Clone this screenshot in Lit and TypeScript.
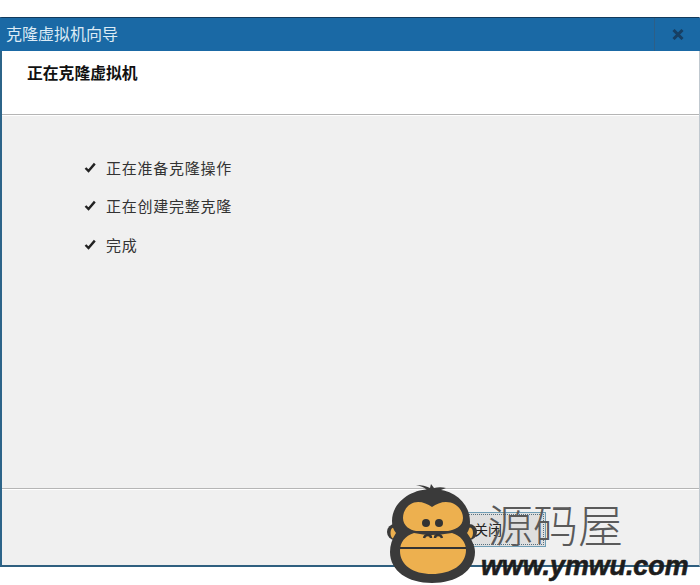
import { LitElement, html, css, svg } from "lit";
import { customElement } from "lit/decorators.js";

const monkey = svg`
  <circle cx="15" cy="52" r="8" fill="#3a3a3a"/>
  <circle cx="89" cy="52" r="8" fill="#3a3a3a"/>
  <ellipse cx="13.5" cy="53" rx="3" ry="5.5" fill="#edb04f"/>
  <ellipse cx="90" cy="53" rx="3" ry="5.5" fill="#edb04f"/>
  <path d="M47 10 C44 7 40 6 36 5 C42 5 46 6 50 8 L51 4 L54 8 C58 7 62 7 66 8 L56 12 Z" fill="#3a3a3a"/>
  <path d="M52 9 C74 9 90 23 90 42 C90 47 89 50 87 53 C92 60 95 66 95 72 C95 91 76 103 52 103 C28 103 10 91 10 72 C10 65 12 59 16 53 C13 49 12 46 12 41 C12 23 30 9 52 9 Z" fill="#3a3a3a"/>
  <path d="M38 22 C43 22 48 24 52 27 C56 24 61 22 66 22 C76 22 83 30 83 38 C83 47 74 50 68 51 L36 51 C30 50 23 46 23 38 C23 29 30 22 38 22 Z" fill="#edb04f"/>
  <path d="M34 53 C40 54 46 55 52 55 C58 55 64 54 72 53 C81 56 86 62 86 70 C86 85 71 94 52 94 C33 94 20 85 20 71 C20 62 25 56 34 53 Z" fill="#edb04f"/>
  <path d="M20 68 H86" stroke="#333" stroke-width="1.8" fill="none"/>
  <circle cx="46" cy="43" r="4" fill="#333"/>
  <circle cx="59" cy="43" r="4" fill="#333"/>
  <path d="M44 58 C45 54 51 54 51 58 M55 58 C55 54 61 54 62 58" stroke="#333" stroke-width="2.4" fill="none"/>
`;

@customElement("app-root")
export class AppRoot extends LitElement {
  static styles = css`
    :host {
      display: block;
      position: relative;
      width: 700px;
      height: 585px;
      background: #fff;
      overflow: hidden;
      font-family: "Noto Sans CJK SC", "Noto Sans", sans-serif;
    }
    .window {
      display: flex;
      flex-direction: column;
      position: absolute;
      inset: 17px 0 18px 0;
      border-top: 1px solid #123a5c;
      border-bottom: 2px solid #2f5f7f;
      border-left: 2px solid #2c6489;
      border-right: 1px solid #bfc8cf;
    }
    .titlebar {
      height: 33px;
      flex: none;
      display: flex;
      align-items: center;
      justify-content: space-between;
      background: #1a69a5;
      color: #dcebf5;
      font-size: 16px;
      line-height: 31px;
      margin-left: -2px;
      padding-left: 6px;
      margin-right: -1px;
    }
    .titlebar span {
      margin-top: -2px;
    }
    .close {
      width: 46px;
      height: 100%;
      box-sizing: border-box;
      border-left: 1px solid #2d5f87;
      display: flex;
      align-items: center;
      justify-content: center;
    }
    .header {
      height: 64px;
      flex: none;
      box-sizing: border-box;
      background: #fff;
      border-bottom: 1px solid #b5b5b5;
      padding: 11px 0 0 25px;
      font-size: 15.8px;
      font-weight: 700;
      line-height: 22px;
      color: #111;
    }
    .body {
      flex: 1;
      background: #f0f0f0;
      border-top: 1px solid #fff;
      padding: 40px 0 0 82px;
      display: flex;
      flex-direction: column;
      gap: 16.5px;
    }
    .step {
      display: flex;
      align-items: center;
      gap: 10px;
      height: 22px;
      font-size: 15px;
      letter-spacing: 0.75px;
      color: #333;
    }
    .footer {
      height: 77px;
      flex: none;
      box-sizing: border-box;
      border-top: 1px solid #b5b5b5;
      background: #f0f0f0;
      box-shadow: inset 0 1px 0 #fff;
      display: flex;
      align-items: center;
      justify-content: flex-end;
      padding: 4px 153px 0 0;
    }
    .btn {
      width: 116px;
      height: 35px;
      box-sizing: border-box;
      border: 1px solid #6f9db5;
      outline: 1px dotted #56707f;
      outline-offset: -3px;
      background: #dfdfdf;
      color: #222;
      font: inherit;
      font-size: 14px;
      padding: 0;
    }
    .logo {
      position: absolute;
      left: 380px;
      top: 480px;
      width: 105px;
      height: 105px;
    }
    .brand {
      position: absolute;
      left: 488px;
      top: 494px;
      font-size: 45px;
      line-height: 60px;
      font-weight: 300;
      color: #5a5a5a;
      white-space: nowrap;
    }
    .url {
      position: absolute;
      left: 481px;
      top: 548px;
      font-family: "Liberation Sans", Arial, sans-serif;
      font-size: 26.8px;
      line-height: 36px;
      font-weight: 700;
      font-style: italic;
      color: #1d1d1d;
      white-space: nowrap;
      -webkit-text-stroke: 0.6px #1d1d1d;
    }
  `;

  private check() {
    return html`<svg width="12" height="11" viewBox="0 0 12 11">
      <path d="M1.5 6 L4.5 9 L10.8 1.6" stroke="#222" stroke-width="2.4" fill="none"/>
    </svg>`;
  }

  render() {
    const steps = ["正在准备克隆操作", "正在创建完整克隆", "完成"];
    return html`
      <div class="window">
        <div class="titlebar">
          <span>克隆虚拟机向导</span>
          <div class="close">
            <svg width="12" height="11" viewBox="0 0 12 11">
              <path d="M1.5 1 L10.5 10 M10.5 1 L1.5 10" stroke="#173f63" stroke-width="3" fill="none"/>
            </svg>
          </div>
        </div>
        <div class="header">正在克隆虚拟机</div>
        <div class="body">
          ${steps.map((s) => html`<div class="step">${this.check()}<span>${s}</span></div>`)}
        </div>
        <div class="footer"><button class="btn">关闭</button></div>
      </div>
      <svg class="logo" viewBox="0 0 105 105">${monkey}</svg>
      <div class="brand">源码屋</div>
      <div class="url">www.ymwu.com</div>
    `;
  }
}
